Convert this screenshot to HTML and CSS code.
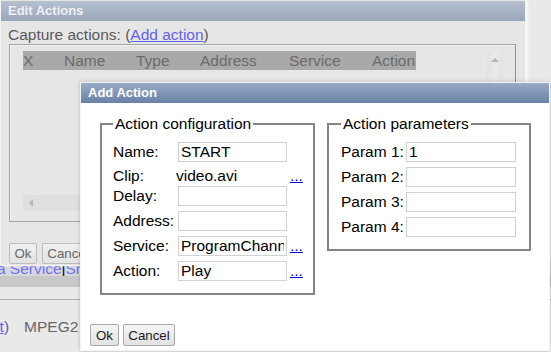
FILE: index.html
```html
<!DOCTYPE html>
<html lang="en">
<head>
    <meta charset="UTF-8">
    <meta name="viewport" content="width=device-width, initial-scale=1.0">
    <title>Edit Actions</title>
    <link rel="stylesheet" href="styles.css">
</head>
<body>

<div class="page">
    <div class="win">
        <div class="win-title">Edit Actions</div>
        <div class="win-body">
            <div class="caption">Capture actions: (<a href="#">Add action</a>)</div>
            <div class="list-box">
                <div class="list-scroll">
                    <div class="list-view">
                        <div class="list-head">
                            <span>X</span>
                            <span>Name</span>
                            <span>Type</span>
                            <span>Address</span>
                            <span>Service</span>
                            <span>Action</span>
                        </div>
                    </div>
                    <div class="vbar"><span class="arrow-up"></span></div>
                    <div class="hbar"><span class="arrow-left"></span></div>
                    <div class="corner"></div>
                </div>
            </div>
            <div class="win-buttons">
                <button class="btn-faded">Ok</button>
                <button class="btn-faded">Cancel</button>
            </div>
        </div>
    </div>

    <div class="links-row"><span class="links-text"><a href="#">Add a Service</a>|<a href="#">Show Services</a></span></div>
    <div class="links-band"></div>
    <div class="rule"></div>
    <div class="info-row"><span class="info-text">(<a href="#">Edit</a><span class="paren">)</span><span class="codec">MPEG2</span></span></div>
</div>

<!-- modal dialog -->
<div class="dialog">
    <div class="dialog-title">Add Action</div>
    <div class="dialog-body">
        <fieldset class="config">
            <legend>Action configuration</legend>
            <div class="form-grid">
                <label for="name">Name:</label>
                <input type="text" id="name" value="START">
                <span></span>

                <span class="clip">Clip:</span>
                <span class="clip clip-value">video.avi</span>
                <a href="#" class="more clip">...</a>

                <label for="delay">Delay:</label>
                <input type="text" id="delay">
                <span></span>

                <label for="address">Address:</label>
                <input type="text" id="address">
                <span></span>

                <label for="service">Service:</label>
                <input type="text" id="service" value="ProgramChannel">
                <a href="#" class="more">...</a>

                <label for="action">Action:</label>
                <input type="text" id="action" value="Play">
                <a href="#" class="more">...</a>
            </div>
        </fieldset>

        <fieldset class="params">
            <legend>Action parameters</legend>
            <div class="param-grid">
                <label for="p1">Param 1:</label>
                <input type="text" id="p1" value="1">
                <label for="p2">Param 2:</label>
                <input type="text" id="p2">
                <label for="p3">Param 3:</label>
                <input type="text" id="p3">
                <label for="p4">Param 4:</label>
                <input type="text" id="p4">
            </div>
        </fieldset>
    </div>
    <div class="dialog-buttons">
        <button class="btn-ok">Ok</button>
        <button class="btn-cancel">Cancel</button>
    </div>
</div>

</body>
</html>
```

FILE: styles.css
```css
/* Page behind the modal (colours already washed out by the overlay) */
body {
    margin: 0;
    background-color: #e9e9e9;
    font-family: "Liberation Sans", Arial, sans-serif;
    font-size: 15.5px;
    overflow: hidden;
}

.page {
    width: 551px;
    height: 352px;
}

.win {
    position: relative;
    z-index: 1;
    width: 526px;
    box-sizing: border-box;
    background: #e6e6e6;
    border: 1px solid #f3f3f3;
    border-top: 0;
    box-shadow: 2px 0 2px rgba(255, 255, 255, 0.7);
    padding-top: 1px;
}

.win-title {
    height: 20px;
    line-height: 20px;
    padding-left: 7px;
    background: linear-gradient(#b5c0ce, #9aa8bb);
    color: #eef1f5;
    font-weight: bold;
    font-size: 13px;
}

.win-body {
    padding: 0 8px 0 7px;
}

.caption {
    margin-top: 5px;
    line-height: 18px;
    color: #5a5a5a;
}

.caption a {
    color: #6262e8;
}

.list-box {
    margin-left: 1px;
    width: 507px;
    box-sizing: border-box;
    border: 1px solid #a3a3a3;
    border-right-color: #8f8f8f;
    box-shadow: inset 1px 1px 0 #f3f3f3;
    padding: 6px 12px 10px 13px;
}

.list-scroll {
    display: grid;
    grid-template-columns: 464px 16px;
    grid-template-rows: 144px 16px;
    height: 160px;
}

.list-head {
    display: grid;
    grid-template-columns: 41px 72px 64px 89px 83px 44px;
    width: 393px;
    height: 19px;
    line-height: 19px;
    background: #a9a9a9;
    color: #6b6b6b;
    white-space: nowrap;
}

.vbar {
    background: linear-gradient(90deg, #e1e1e1, #eaeaea 50%, #e1e1e1);
    display: flex;
    justify-content: center;
    padding-top: 7px;
    box-sizing: border-box;
}

.hbar {
    background: #dfdfdf;
    display: flex;
    align-items: center;
    padding-left: 6px;
}

.corner {
    background: #e3e3e3;
}

.arrow-up {
    width: 0;
    height: 0;
    border-left: 4px solid transparent;
    border-right: 4px solid transparent;
    border-bottom: 4px solid #b5b5b5;
}

.arrow-left {
    width: 0;
    height: 0;
    border-top: 4px solid transparent;
    border-bottom: 4px solid transparent;
    border-right: 4px solid #b5b5b5;
}

.win-buttons {
    margin: 21px 0 0 1px;
    display: flex;
    gap: 5px;
    height: 21px;
    padding-bottom: 1px;
}

button {
    font-family: "Liberation Sans", Arial, sans-serif;
    font-size: 13.33px;
    padding: 0;
    border-radius: 2px;
}

.btn-faded {
    height: 21px;
    border: 1px solid #bcbcbc;
    background: linear-gradient(#f1f1f1, #e2e2e2);
    color: #666;
}

.btn-faded:first-child {
    width: 28px;
}

.btn-faded:last-child {
    width: 52px;
}

.links-row {
    margin-top: -6px;
    height: 16px;
    line-height: 18px;
    background: #d8d8dc;
    white-space: nowrap;
    overflow: hidden;
}

.links-text {
    margin-left: -35px;
}

.links-row a {
    color: #6f6ff0;
    text-decoration: none;
}

.links-band {
    height: 11px;
    background: #c8c8c8;
}

.rule {
    margin-top: 12px;
    height: 1px;
    background: #ababab;
}

.info-row {
    margin-top: 18px;
    line-height: 18px;
    white-space: nowrap;
    overflow: hidden;
}

.info-text {
    margin-left: -28px;
    color: #5d5dc6;
}

.info-row a {
    color: #6262e8;
}

.codec {
    margin-left: 15px;
    color: #666;
}

/* Add Action dialog */
.dialog {
    position: absolute;
    left: 80px;
    top: 82px;
    width: 470px;
    height: 269px;
    box-sizing: border-box;
    background: #fff;
    border: 1px solid #f4f4f4;
    box-shadow: 0 0 4px rgba(0, 0, 0, 0.2);
    z-index: 2;
}

.dialog-title {
    height: 20px;
    line-height: 20px;
    padding-left: 7px;
    background: linear-gradient(#98abc8, #6881a4);
    color: #fff;
    font-weight: bold;
    font-size: 13px;
}

.dialog-body {
    display: flex;
    align-items: flex-start;
    gap: 12px;
    padding: 12px 0 0 19px;
}

fieldset {
    margin: 0;
    border: 2px solid #858585;
    box-sizing: border-box;
}

legend {
    padding: 0 2px;
    line-height: 18px;
    color: #000;
}

.config {
    width: 215px;
    padding: 0 0 12px 11px;
}

.params {
    width: 204px;
    padding: 0 0 12px 12px;
}

.form-grid {
    display: grid;
    grid-template-columns: 65px 109px auto;
    grid-template-rows: 20px 14px 20px 20px 20px 20px;
    row-gap: 5px;
    align-items: center;
    margin-top: 9px;
}

.param-grid {
    display: grid;
    grid-template-columns: 65px 110px;
    grid-auto-rows: 20px;
    row-gap: 5px;
    align-items: center;
    margin-top: 9px;
}

label, .clip {
    line-height: 18px;
    color: #000;
}

.clip {
    margin-top: 3px;
}

.clip-value {
    margin-left: -2px;
}

.more {
    margin-left: 3px;
    color: #0000ee;
    line-height: 18px;
}

input {
    width: 100%;
    height: 20px;
    box-sizing: border-box;
    border: 1px solid #cfd1d4;
    padding: 0 2px;
    font-family: "Liberation Sans", Arial, sans-serif;
    font-size: 15.5px;
    color: #000;
    outline: none;
}

.dialog-buttons {
    display: flex;
    gap: 4px;
    margin: 29px 0 0 9px;
}

.btn-ok, .btn-cancel {
    height: 22px;
    border: 1px solid #a9a9a9;
    background: linear-gradient(#f5f5f5, #e2e2e2);
    color: #1a1a1a;
}

.btn-ok {
    width: 29px;
}

.btn-cancel {
    width: 52px;
}
```
